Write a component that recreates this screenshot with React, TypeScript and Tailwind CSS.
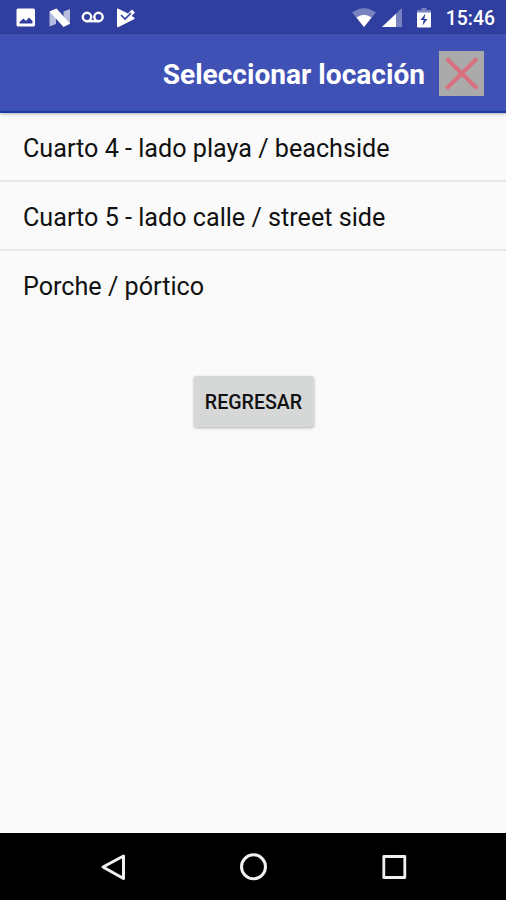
const LOCATIONS = [
  "Cuarto 4 - lado playa / beachside",
  "Cuarto 5 - lado calle / street side",
  "Porche / pórtico",
];

const StatusBar = () => {
  return (
    <div className="flex h-[34px] shrink-0 items-center justify-between bg-[#303f9f] pl-4 pr-[11px] pt-px text-white">
      <div className="flex items-center">
        <svg className="h-5 w-5" viewBox="0 0 20 20">
          <path
            fill="currentColor"
            fillRule="evenodd"
            d="M2 .5h15.500a1.500 1.500 0 0 1 1.500 1.500v15a1.500 1.500 0 0 1-1.500 1.500H2a1.500 1.500 0 0 1-1.500-1.500V2A1.500 1.500 0 0 1 2 .5zM3.500 15.500h13v-2.500l-3.500-3.500-3 3.500-2.500-2.500-4 3.500z"
          />
        </svg>
        <svg className="ml-3 h-5 w-6" viewBox="0 0 24 20">
          <path fill="currentColor" opacity=".65" d="M1.500 3.500L8 1v15l-6.500 2.500zM15.500 3.500L22 1v15l-6.500 2.500z" />
          <path fill="currentColor" d="M1.500 3.500L8.500 .5 22 15.500l-6.500 3.500z" />
        </svg>
        <svg className="ml-2 h-5 w-6" viewBox="0 0 24 20" fill="none" stroke="currentColor" strokeWidth="2.400">
          <circle cx="7" cy="9" r="4.200" />
          <circle cx="18.500" cy="9" r="4.200" />
          <path d="M7 13.200h11.500" />
        </svg>
        <svg className="ml-3 h-5 w-5" viewBox="0 0 20 20">
          <path fill="currentColor" d="M1 1.500Q1 0 2.500 .7L12 5.500 16 1.500 19 4.500 15.500 8 18 9.200q1.500 1 0 2L2.500 19Q1 19.700 1 18z" />
          <path fill="none" stroke="#303f9f" strokeWidth="1.600" d="M5 7l4 4 6-6" />
        </svg>
      </div>
      <div className="flex items-center">
        <svg className="h-5 w-6" viewBox="0 0 24 20">
          <path fill="currentColor" opacity=".35" d="M0 4.500Q12-4 24 4.500L12 19z" />
          <path fill="currentColor" d="M4.500 9.500Q12 4 19.500 9.500L12 19z" />
        </svg>
        <svg className="ml-1.5 h-5 w-5" viewBox="0 0 20 20">
          <path fill="currentColor" opacity=".35" d="M20 0v19H0z" />
          <path fill="currentColor" d="M14 5.700V19H0z" />
        </svg>
        <svg className="ml-[15px] h-5 w-3.5" viewBox="0 0 14 20">
          <path fill="currentColor" opacity=".35" d="M4.500 0h5v2H14v3H0V2h4.500z" />
          <path
            fill="currentColor"
            fillRule="evenodd"
            d="M0 4.500h14v14a1 1 0 0 1-1 1H1a1 1 0 0 1-1-1zM8.500 5.500l-5 6.500h3.200L5.500 17.500l5-6.500H7.300z"
          />
        </svg>
        <span className="ml-[15px] mt-0.5 text-[19.400px] font-medium leading-none">15:46</span>
      </div>
    </div>
  );
};

const NavBar = () => {
  return (
    <nav className="flex h-[67px] shrink-0 items-center justify-between bg-black px-[98px] text-[#f1f1f1]">
      <svg className="h-[30px] w-[30px]" viewBox="0 0 30 30" fill="none" stroke="currentColor" strokeWidth="3" strokeLinejoin="round">
        <path d="M25.500 4v22.500L5 15z" />
      </svg>
      <svg className="h-[30px] w-[30px]" viewBox="0 0 30 30" fill="none" stroke="currentColor" strokeWidth="3">
        <circle cx="15.500" cy="14.800" r="12" />
      </svg>
      <svg className="h-[30px] w-[30px]" viewBox="0 0 30 30" fill="none" stroke="currentColor" strokeWidth="2.800" strokeLinejoin="round">
        <rect x="5.800" y="4.500" width="21" height="21" />
      </svg>
    </nav>
  );
};

const App = () => {
  return (
    <div className="flex h-[900px] w-[506px] flex-col overflow-hidden bg-[#fafafa] font-[Roboto,sans-serif]">
      <StatusBar />
      <header className="z-10 flex h-[79px] shrink-0 items-center justify-end border-b-2 border-[#1c3ba6] bg-[#3f51b5] pr-[22px] shadow-[0_1px_3px_rgba(0,0,0,0.3)]">
        <h1 className="mt-1 text-[28.100px] font-bold leading-8 text-white">Seleccionar locación</h1>
        <button className="ml-3.5 mt-0.5 h-[45px] w-[45px] bg-[#aaaaaa]">
          <svg className="h-[45px] w-[45px]" viewBox="0 0 45 45" fill="none" stroke="#d9707f" strokeWidth="4">
            <path d="M7.500 7.500l30.500 30M38 7.500l-30.500 30" />
          </svg>
        </button>
      </header>
      <ul className="text-[25.160px] text-[#111111]">
        {LOCATIONS.map((name) => (
          <li
            key={name}
            className="flex h-[69px] items-center border-b-2 border-[#e8e8e8] pl-[23px] pt-1 last:border-transparent"
          >
            {name}
          </li>
        ))}
      </ul>
      <div className="mt-14 flex flex-1 items-start justify-center">
        <button className="ml-px h-[51px] w-[120px] rounded-[3px] bg-[#d6d7d7] pt-0.5 text-[19.600px] font-medium text-[#111111] shadow-[0_1px_3px_rgba(0,0,0,0.3)]">
          REGRESAR
        </button>
      </div>
      <NavBar />
    </div>
  );
};

export default App;
